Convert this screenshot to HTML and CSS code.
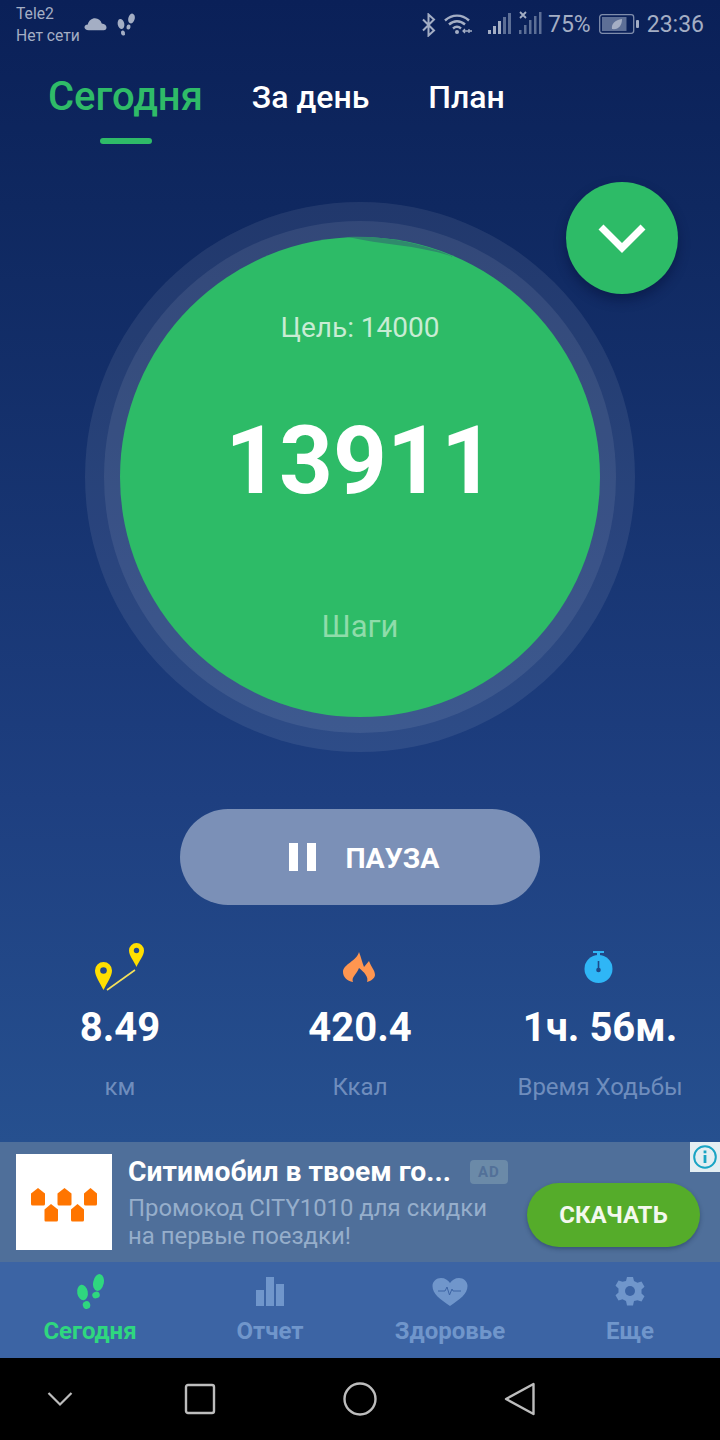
FILE: index.html
```html
<!DOCTYPE html>
<html lang="ru">
<head>
<meta charset="utf-8">
<title>Шаги</title>
<link rel="stylesheet" href="styles.css">
</head>
<body>
<div class="screen">
  <div class="main">
    <header class="status">
      <div class="carrier"><span>Tele2</span><span>Нет сети</span></div>
      <svg class="st-cloud" viewBox="0 0 24 14"><path d="M5 13.500C2 13.500 .5 12 .5 10.500 .5 8.800 2 7.500 4 7.500 4.800 3.500 8 1 11.500 1c3.500 0 6 2.200 7 5.500 3 .2 5 2 5 4.200 0 1.700-1 2.800-3 2.800z" fill="#a4aec4"/></svg>
      <svg class="st-steps" viewBox="0 0 20 24"><g fill="#a4aec4"><ellipse cx="5" cy="11" rx="3.300" ry="5" transform="rotate(-12 5 11)"/><ellipse cx="7" cy="20" rx="2" ry="2.600" transform="rotate(-15 7 20)"/><ellipse cx="15.500" cy="5.500" rx="3.200" ry="5" transform="rotate(14 15.500 5.500)"/><ellipse cx="12.500" cy="14" rx="2" ry="2.500" transform="rotate(15 12.500 14)"/></g></svg>
      <div class="status-right">
        <svg class="st-bt" viewBox="0 0 16 24"><path d="M2 6.500l11 11-5.500 5V1.500l5.500 5-11 11" fill="none" stroke="#a4aec4" stroke-width="2"/></svg>
        <svg class="st-wifi" viewBox="0 0 28 22"><g fill="none" stroke="#a4aec4" stroke-width="2.400"><path d="M1 7.500c7-6.500 17-6.500 24 0"/><path d="M5 11.500c4.800-4.300 11.200-4.300 16 0"/><path d="M9 15.500c2.600-2.200 5.400-2.200 8 0"/></g><circle cx="13" cy="19" r="2" fill="#a4aec4"/><path d="M19 18h9M21 16l-2 2 2 2M25 16v4" stroke="#a4aec4" stroke-width="1.300" fill="none"/></svg>
        <svg class="st-sig1" viewBox="0 0 24 22"><g fill="#a4aec4"><rect x="0" y="17" width="3" height="4"/><rect x="5" y="13" width="3" height="8"/><rect x="10" y="8" width="3" height="13"/></g><g fill="#5d6f96"><rect x="15" y="4" width="3" height="17"/><rect x="20" y="0" width="3" height="21"/></g></svg>
        <svg class="st-sig2" viewBox="0 0 24 24"><path d="M1 1l6 6M7 1L1 7" stroke="#a4aec4" stroke-width="1.800"/><g fill="#5d6f96"><rect x="0" y="19" width="2.500" height="4"/><rect x="5" y="14" width="2.500" height="9"/><rect x="10" y="9" width="2.500" height="14"/><rect x="15" y="5" width="2.500" height="18"/><rect x="20" y="1" width="2.500" height="22"/></g></svg>
        <span class="st-pct">75%</span>
        <svg class="st-batt" viewBox="0 0 40 20"><rect x=".7" y=".7" width="34" height="18.600" rx="2.500" fill="none" stroke="#7f8dab" stroke-width="1.300"/><rect x="3" y="3" width="24.500" height="14" fill="#5d6f96"/><rect x="37" y="6" width="3" height="8" rx="1" fill="#a4aec4"/><path d="M13 15c-1-5 3-9 10-10 0 7-4 11-10 10z" fill="#a4aec4"/></svg>
        <span class="st-time">23:36</span>
      </div>
    </header>

    <nav class="tabs">
      <div class="tab tab-on">Сегодня</div>
      <div class="tab tab-day">За день</div>
      <div class="tab tab-plan">План</div>
    </nav>

    <section class="hero">
      <div class="ring-outer">
        <div class="ring-mid">
          <div class="disc">
            <svg class="sliver" viewBox="0 0 480 480"><path d="M228 .1C262 -1.500 300 5 334 20 298 8 262 8 228 .1z" fill="#2f8a6c"/></svg>
            <div class="goal">Цель: 14000</div>
            <div class="count">13911</div>
            <div class="unit">Шаги</div>
          </div>
        </div>
      </div>
      <button class="fab" type="button">
        <svg viewBox="0 0 48 30"><path d="M3 4l21 21L45 4" fill="none" stroke="#fff" stroke-width="7"/></svg>
      </button>
    </section>

    <button class="pause" type="button">
      <span class="pause-bars"><i></i><i></i></span>
      <span class="pause-text">ПАУЗА</span>
    </button>

    <section class="stats">
      <div class="stat">
        <svg class="stat-icon" viewBox="0 0 50 50"><path d="M8.500 49C5 42 0 35 0 29.500a8.500 8.500 0 0 1 17 0C17 35 12 42 8.500 49z" fill="#ffdf00"/><circle cx="8.500" cy="29.500" r="3.300" fill="#24488a"/><path d="M41.500 26C39 20 34 15 34 9.500a7.500 7.500 0 0 1 15 0C49 15 44 20 41.500 26z" fill="#ffdf00"/><circle cx="41.500" cy="9.500" r="2.700" fill="#24488a"/><path d="M12 49l28-20" stroke="#f5e15a" stroke-width="1.600"/></svg>
        <div class="stat-val">8.49</div>
        <div class="stat-lab">км</div>
      </div>
      <div class="stat">
        <svg class="stat-icon" viewBox="0 0 50 50"><path d="M24 11C26 16 27 21 29 26L34 20C36 26 40 29 40 34 40 37 36 40 32 41 34 36 29 31 24 27 22 33 16 36 18 41 12 40 8 36 8 31 8 23 22 20 24 11z" fill="#ff9650"/></svg>
        <div class="stat-val">420.4</div>
        <div class="stat-lab">Ккал</div>
      </div>
      <div class="stat">
        <svg class="stat-icon" viewBox="0 0 50 50"><rect x="18" y="10" width="11" height="2" fill="#2fb6f6"/><rect x="22" y="11" width="3" height="5" fill="#2fb6f6"/><circle cx="23.500" cy="28" r="14" fill="#2fb6f6"/><rect x="22.700" y="20" width="1.600" height="9" fill="#1d4a8a"/><circle cx="23.500" cy="29" r="2.300" fill="#1d4a8a"/></svg>
        <div class="stat-val">1ч. 56м.</div>
        <div class="stat-lab">Время Ходьбы</div>
      </div>
    </section>
  </div>

  <aside class="ad">
    <div class="ad-logo">
      <svg viewBox="0 0 96 96"><g fill="#ff7500"><path d="M15 39.500l7-5.500 7 5.500V50q0 1.500-1.500 1.500h-11Q15 51.500 15 50z"/><path d="M41.500 39.500l7-5.500 7 5.500V50q0 1.500-1.500 1.500H43Q41.500 51.500 41.500 50z"/><path d="M68 39.500l6.500-5.500 6.500 5.500V50q0 1.500-1.500 1.500h-10Q68 51.500 68 50z"/><path d="M28.500 55.500l6.500-5.500 7 5.500V66q0 1.500-1.500 1.500h-11Q28.500 67.500 28.500 66z"/><path d="M55 55.500l6.500-5.500 6.500 5.500V66q0 1.500-1.500 1.500h-10Q55 67.500 55 66z"/></g></svg>
    </div>
    <div class="ad-copy">
      <div class="ad-head"><span class="ad-title">Ситимобил в твоем го...</span><span class="ad-badge">AD</span></div>
      <div class="ad-desc">Промокод CITY1010 для скидки<br>на первые поездки!</div>
    </div>
    <div class="ad-btn">СКАЧАТЬ</div>
    <div class="ad-info">
      <svg viewBox="0 0 30 30"><circle cx="15" cy="15" r="10.800" fill="none" stroke="#19a4c4" stroke-width="2"/><rect x="13.600" y="13" width="2.800" height="8" fill="#19a4c4"/><rect x="13.600" y="8.500" width="2.800" height="2.800" fill="#19a4c4"/></svg>
    </div>
  </aside>

  <nav class="bottom">
    <div class="bn bn-on">
      <svg viewBox="0 0 30 36"><g fill="#2fd77f"><ellipse cx="7.500" cy="19.500" rx="5.300" ry="7.800" transform="rotate(-10 7.500 19.500)"/><ellipse cx="11.500" cy="32" rx="3.700" ry="4" transform="rotate(-15 11.500 32)"/><ellipse cx="23.500" cy="9.500" rx="5.300" ry="8.500" transform="rotate(12 23.500 9.500)"/><ellipse cx="21" cy="22" rx="3.800" ry="3.300" transform="rotate(-20 21 22)"/></g></svg>
      <span>Сегодня</span>
    </div>
    <div class="bn">
      <svg viewBox="0 0 30 36"><g fill="#7096cb"><rect x="1" y="17" width="8" height="16"/><rect x="11" y="4" width="8" height="29"/><rect x="21" y="11" width="8" height="22"/></g></svg>
      <span>Отчет</span>
    </div>
    <div class="bn">
      <svg class="bn-heart" viewBox="0 0 36 36"><path d="M18 33C8 26 .5 21 .5 13 .5 8.500 4.500 5 9 5c4 0 7 2 9 5 2-3 5-5 9-5 4.500 0 8.500 3.500 8.500 8 0 8-7.500 13-17.500 20z" fill="#7096cb"/><path d="M6 18h7l2-4 2.500 8 2.500-6 1 2h8" fill="none" stroke="#3c64a4" stroke-width="1"/></svg>
      <span>Здоровье</span>
    </div>
    <div class="bn">
      <svg viewBox="0 0 30 36"><path d="M12 4h6l1 4 3.500 1.800 4-1.300 3 5.200-3 2.800v4l3 2.800-3 5.200-4-1.300L19 28l-1 4.500h-6L11 28l-3.500-1.800-4 1.300-3-5.200 3-2.800v-4l-3-2.800 3-5.200 4 1.300L11 8z" fill="#7096cb"/><circle cx="15" cy="18" r="5" fill="#3c64a4"/></svg>
      <span>Еще</span>
    </div>
  </nav>

  <footer class="sys">
    <svg class="sys-chev" viewBox="0 0 26 16"><path d="M1.500 2L13 13.500 24.500 2" fill="none" stroke="#bdbdbd" stroke-width="2.200"/></svg>
    <svg class="sys-sq" viewBox="0 0 32 32"><rect x="2" y="2" width="28" height="28" rx="2" fill="none" stroke="#bdbdbd" stroke-width="2.400"/></svg>
    <svg class="sys-ci" viewBox="0 0 34 34"><circle cx="17" cy="17" r="15.500" fill="none" stroke="#bdbdbd" stroke-width="2.400"/></svg>
    <svg class="sys-tr" viewBox="0 0 32 34"><path d="M29.500 2v30L2 17z" fill="none" stroke="#bdbdbd" stroke-width="2.400" stroke-linejoin="round"/></svg>
  </footer>
</div>
</body>
</html>
```
FILE: styles.css
```css
* { box-sizing: border-box; }
html, body { margin: 0; padding: 0; }
body { font-family: Roboto, "Noto Sans", sans-serif; background: #000; }
.screen { width: 720px; height: 1440px; display: flex; flex-direction: column; overflow: hidden; position: relative; }

.main { height: 1142px; display: flex; flex-direction: column; background: linear-gradient(180deg, #0a2058 0%, #0f2860 18%, #1e3f80 70%, #26508f 100%); }

.status { height: 50px; display: flex; align-items: flex-start; padding-left: 16px; color: #a4aec4; }
.carrier { display: flex; flex-direction: column; font-size: 15.700px; line-height: 22px; padding-top: 3px; width: 68px; flex: none; white-space: nowrap; }
.st-cloud { width: 23px; height: 14px; margin-top: 17px; flex: none; }
.st-steps { width: 20px; height: 24px; margin: 13px 0 0 9px; flex: none; }
.status-right { margin-left: auto; padding-right: 16px; display: flex; align-items: flex-start; }
.st-bt { width: 16px; height: 24px; margin-top: 13px; }
.st-wifi { width: 28px; height: 22px; margin: 13px 0 0 7px; }
.st-sig1 { width: 24px; height: 22px; margin: 13px 0 0 16px; }
.st-sig2 { width: 24px; height: 24px; margin: 11px 0 0 7px; }
.st-pct { font-size: 23px; line-height: 28px; margin: 11px 0 0 5px; }
.st-batt { width: 40px; height: 20px; margin: 14px 0 0 8px; }
.st-time { font-size: 23px; line-height: 28px; margin: 11px 0 0 8px; }

.tabs { height: 100px; display: flex; align-items: flex-start; color: #fff; }
.tab { white-space: nowrap; font-weight: 500; }
.tab-on { position: relative; color: #2fbb68; font-size: 40px; line-height: 44px; margin: 25px 0 0 48px; }
.tab-on::after { content: ""; position: absolute; left: 52px; top: 63px; width: 52px; height: 6px; border-radius: 3px; background: #2fbb68; }
.tab-day { font-size: 32px; line-height: 36px; margin: 29px 0 0 49px; }
.tab-plan { font-size: 32px; line-height: 36px; margin: 29px 0 0 59px; }

.hero { position: relative; height: 550px; margin-top: 52px; display: flex; justify-content: center; }
.ring-outer { width: 550px; height: 550px; border-radius: 50%; background: rgba(255, 255, 255, .08); display: flex; align-items: center; justify-content: center; }
.ring-mid { width: 512px; height: 512px; border-radius: 50%; background: rgba(255, 255, 255, .08); display: flex; align-items: center; justify-content: center; }
.disc { position: relative; width: 480px; height: 480px; border-radius: 50%; background: #2dbb67; display: flex; flex-direction: column; align-items: center; color: #fff; }
.sliver { position: absolute; left: 0; top: 0; width: 480px; height: 480px; overflow: visible; }
.goal { font-size: 28px; line-height: 32px; margin-top: 75px; color: #c8ecd4; }
.count { font-size: 94px; line-height: 112px; font-weight: 700; margin-top: 61px; }
.unit { font-size: 31px; line-height: 36px; margin-top: 92px; color: #8fdcaa; }

.fab { position: absolute; left: 566px; top: -20px; width: 112px; height: 112px; border: 0; padding: 0; border-radius: 50%; background: #2dbb67; box-shadow: 0 6px 12px rgba(4, 14, 50, .45); display: flex; align-items: center; justify-content: center; }
.fab svg { width: 48px; height: 30px; }

.pause { align-self: center; width: 360px; height: 96px; margin-top: 57px; border: 0; border-radius: 48px; background: #7b90b7; display: flex; align-items: center; justify-content: center; color: #fff; font-family: inherit; padding: 0 0 0 9px; flex: none; }
.pause-bars { display: flex; gap: 9px; margin-right: 29px; }
.pause-bars i { display: block; width: 9px; height: 28px; background: #fff; }
.pause-text { font-size: 28.500px; line-height: 30px; font-weight: 700; margin-top: 3px; }

.stats { display: grid; grid-template-columns: repeat(3, 240px); margin-top: 36px; }
.stat { display: flex; flex-direction: column; align-items: center; }
.stat-icon { width: 50px; height: 50px; display: block; }
.stat-val { font-size: 40px; line-height: 46px; font-weight: 700; color: #fff; margin-top: 14px; white-space: nowrap; }
.stat-lab { font-size: 24px; line-height: 28px; color: #6f8dbd; margin-top: 22px; white-space: nowrap; }

.ad { position: relative; height: 120px; background: #4f6f9a; display: flex; align-items: flex-start; flex: none; padding: 12px 20px 0 16px; }
.ad-logo { width: 96px; height: 96px; background: #fff; flex: none; }
.ad-logo svg { display: block; width: 96px; height: 96px; }
.ad-copy { margin-left: 16px; width: 383px; flex: none; }
.ad-head { display: flex; align-items: center; height: 36px; }
.ad-title { font-size: 28.300px; line-height: 36px; font-weight: 700; color: #fff; white-space: nowrap; }
.ad-badge { margin-left: 19px; width: 38px; height: 24px; border-radius: 4px; background: #6b8aa8; color: #527098; font-size: 15px; font-weight: 700; letter-spacing: 1px; line-height: 24px; text-align: center; }
.ad-desc { font-size: 23.900px; line-height: 28px; color: #96aecb; white-space: nowrap; margin-top: 4px; }
.ad-btn { position: absolute; left: 527px; top: 41px; width: 173px; height: 64px; border-radius: 32px; background: #55ac2a; box-shadow: 0 2px 4px rgba(20, 40, 70, .4); color: #f4f8ee; font-size: 24px; font-weight: 700; line-height: 64px; text-align: center; }
.ad-info { position: absolute; right: 0; top: 0; width: 30px; height: 30px; background: #e4eef2; }
.ad-info svg { display: block; width: 30px; height: 30px; }

.bottom { height: 96px; flex: none; background: #3c64a4; display: grid; grid-template-columns: repeat(4, 180px); }
.bn { display: flex; flex-direction: column; align-items: center; padding-top: 11px; color: #7096cb; font-size: 24px; font-weight: 700; line-height: 28px; }
.bn svg { width: 30px; height: 36px; display: block; margin-bottom: 8px; }
.bn .bn-heart { width: 36px; }
.bn-on { color: #2fd77f; }

.sys { height: 82px; flex: none; background: #000; display: flex; align-items: center; padding: 0 0 1px 47px; }
.sys svg { display: block; flex: none; }
.sys-chev { width: 26px; height: 16px; }
.sys-sq { width: 32px; height: 32px; margin-left: 111px; }
.sys-ci { width: 34px; height: 34px; margin-left: 127px; }
.sys-tr { width: 32px; height: 34px; margin-left: 127px; }
```
